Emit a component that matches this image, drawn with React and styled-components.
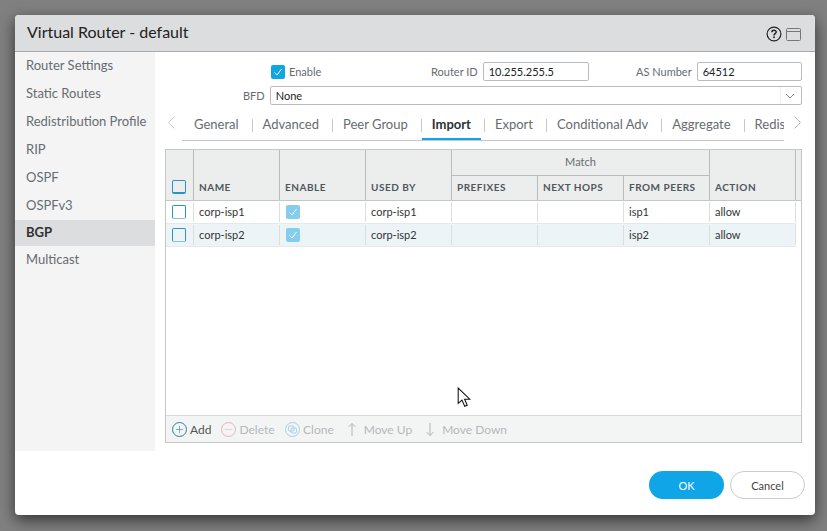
import React from "react";
import styled, { createGlobalStyle } from "styled-components";
import { Plus, Minus } from "lucide-react";

const GlobalStyle = createGlobalStyle`
  html, body {
    margin: 0;
    height: 100%;
    background: #808080;
    font-family: "Lato", "Liberation Sans", sans-serif;
  }
  * { box-sizing: border-box; }
`;

const columns = "28px repeat(7, 86px) 1fr";

const sideItems = [
  "Router Settings",
  "Static Routes",
  "Redistribution Profile",
  "RIP",
  "OSPF",
  "OSPFv3",
  "BGP",
  "Multicast",
];

const tabs = ["General", "Advanced", "Peer Group", "Import", "Export", "Conditional Adv", "Aggregate", "Redis"];

const rows = [
  { name: "corp-isp1", usedBy: "corp-isp1", peers: "isp1", action: "allow" },
  { name: "corp-isp2", usedBy: "corp-isp2", peers: "isp2", action: "allow" },
];

const CheckMark = () => (
  <svg width="10" height="10" viewBox="0 0 10 10" fill="none">
    <path d="M1.5 5.5 L4 8 L8.5 2" stroke="#fff" strokeWidth="1" />
  </svg>
);

const HelpIcon = () => (
  <svg width="16" height="16" viewBox="0 0 16 16" fill="none">
    <circle cx="8" cy="8" r="6.9" stroke="#222" strokeWidth="1.2" />
    <path d="M5.9 6.2 C5.9 3.7 10.2 3.7 10.2 6.1 C10.2 7.7 8 7.6 8 9.4" stroke="#222" strokeWidth="1.5" />
    <rect x="7.2" y="10.4" width="1.6" height="1.7" fill="#222" />
  </svg>
);

const MaxIcon = () => (
  <svg width="15" height="13" viewBox="0 0 15 13" fill="none">
    <rect x="0.5" y="0.5" width="14" height="12" rx="1" stroke="#777" />
    <path d="M1 3.5 H14" stroke="#777" />
  </svg>
);

const MouseCursor = () => (
  <svg width="15" height="21" viewBox="0 0 14 20">
    <path d="M1 1 V15.5 L4.6 12.4 L7.2 18.4 L9.6 17.3 L7.1 11.6 H12 Z" fill="#fff" stroke="#111" strokeWidth="1" />
  </svg>
);

const CloneIcon = () => (
  <svg width="15" height="15" viewBox="0 0 15 15" fill="none">
    <circle cx="7.5" cy="7.5" r="7" stroke="#a6d0e4" />
    <rect x="3.5" y="4" width="5.5" height="5" rx="1.2" stroke="#a6d0e4" />
    <rect x="6" y="6" width="5.5" height="5" rx="1.2" stroke="#a6d0e4" />
  </svg>
);

const UpArrow = () => (
  <svg width="14" height="15" viewBox="0 0 14 15" fill="none">
    <path d="M7 1.5 V14 M3.5 5 L7 1.5 L10.5 5" stroke="#b0b4b6" strokeWidth="1" />
  </svg>
);

const DownArrow = () => (
  <svg width="14" height="15" viewBox="0 0 14 15" fill="none">
    <path d="M7 1 V13.5 M3.5 10 L7 13.5 L10.5 10" stroke="#b0b4b6" strokeWidth="1" />
  </svg>
);

export default function App() {
  return (
    <>
      <GlobalStyle />
      <Page>
        <Dialog>
          <Header>
            <Title>Virtual Router - default</Title>
            <HeaderIcons>
              <HelpIcon />
              <MaxIcon />
            </HeaderIcons>
          </Header>
          <Body>
            <Sidebar>
              {sideItems.map(item => (
                <SideItem key={item} $active={item === "BGP"}>{item}</SideItem>
              ))}
            </Sidebar>
            <Content>
              <TopRow>
                <EnableGroup>
                  <BlueCheck><CheckMark /></BlueCheck>
                  <FieldLabel>Enable</FieldLabel>
                </EnableGroup>
                <RouterGroup>
                  <FieldLabel>Router ID</FieldLabel>
                  <InputBox $width="106px">10.255.255.5</InputBox>
                </RouterGroup>
                <AsGroup>
                  <FieldLabel>AS Number</FieldLabel>
                  <InputBox $width="105px">64512</InputBox>
                </AsGroup>
              </TopRow>
              <BfdRow>
                <BfdLabel>BFD</BfdLabel>
                <SelectBox>
                  None
                  <SelectArrow>
                    <svg width="10" height="6" viewBox="0 0 10 6" fill="none">
                      <path d="M1 1 L5 5 L9 1" stroke="#888" strokeWidth="1" />
                    </svg>
                  </SelectArrow>
                </SelectBox>
              </BfdRow>
              <TabBar>
                <TabArrow>
                  <svg width="9" height="13" viewBox="0 0 9 13" fill="none">
                    <path d="M7.5 0.5 L1.5 6.5 L7.5 12.5" stroke="#ccc" strokeWidth="1" />
                  </svg>
                </TabArrow>
                <TabList>
                  {tabs.map((tab, i) => (
                    <React.Fragment key={tab}>
                      {i > 0 && <TabDivider />}
                      <Tab $active={tab === "Import"}>{tab}</Tab>
                    </React.Fragment>
                  ))}
                </TabList>
                <NextArrow>
                  <svg width="9" height="13" viewBox="0 0 9 13" fill="none">
                    <path d="M1.5 0.5 L7.5 6.5 L1.5 12.5" stroke="#bbb" strokeWidth="1" />
                  </svg>
                </NextArrow>
              </TabBar>
              <TablePanel>
                <HeadGrid>
                  <CheckHead><EmptyCheck $head /></CheckHead>
                  <HeadCell $span={2}>NAME</HeadCell>
                  <HeadCell $span={2}>ENABLE</HeadCell>
                  <HeadCell $span={2}>USED BY</HeadCell>
                  <MatchCell>Match</MatchCell>
                  <HeadCell>PREFIXES</HeadCell>
                  <HeadCell>NEXT HOPS</HeadCell>
                  <HeadCell>FROM PEERS</HeadCell>
                  <ActionHead>ACTION</ActionHead>
                  <FillerHead />
                </HeadGrid>
                {rows.map((row, i) => (
                  <Row key={row.name} $alt={i % 2 === 1}>
                    <CheckCell><EmptyCheck /></CheckCell>
                    <Cell>{row.name}</Cell>
                    <EnableCell><PaleCheck><CheckMark /></PaleCheck></EnableCell>
                    <Cell>{row.usedBy}</Cell>
                    <Cell />
                    <Cell />
                    <Cell>{row.peers}</Cell>
                    <Cell>{row.action}</Cell>
                  </Row>
                ))}
                <TableSpace>
                  <CursorSpot><MouseCursor /></CursorSpot>
                </TableSpace>
                <Toolbar>
                  <ToolButton $first>
                    <RoundIcon $color="#2d7fa5"><Plus size={11} strokeWidth={1.3} /></RoundIcon>
                    Add
                  </ToolButton>
                  <ToolButton $gap="10.5px">
                    <RoundIcon $color="#e8b3b3"><Minus size={11} strokeWidth={1.3} /></RoundIcon>
                    Delete
                  </ToolButton>
                  <ToolButton $gap="11px">
                    <CloneIcon />
                    Clone
                  </ToolButton>
                  <ToolButton $wide $gap="11px">
                    <UpArrow />
                    Move Up
                  </ToolButton>
                  <ToolButton $wide>
                    <DownArrow />
                    Move Down
                  </ToolButton>
                </Toolbar>
              </TablePanel>
            </Content>
          </Body>
          <Footer>
            <OkButton>OK</OkButton>
            <CancelButton>Cancel</CancelButton>
          </Footer>
        </Dialog>
      </Page>
    </>
  );
}

const Page = styled.div`
  width: 827px;
  height: 531px;
  padding: 15px 12px;
  overflow: hidden;
`;

const Dialog = styled.div`
  width: 800px;
  height: 500px;
  margin-left: 3px;
  background: #fff;
  border-radius: 4px;
  overflow: hidden;
  box-shadow: 0 5px 15px rgba(0, 0, 0, 0.6);
  display: flex;
  flex-direction: column;
`;

const Header = styled.div`
  height: 37px;
  flex: none;
  background: #dcddde;
  border-bottom: 1px solid #a8a9aa;
  padding: 2px 14px 0 12px;
  display: flex;
  align-items: center;
  justify-content: space-between;
`;

const Title = styled.div`
  font-size: 16px;
  color: #222;
  margin-top: -5px;
`;

const HeaderIcons = styled.div`
  display: flex;
  align-items: center;
  gap: 4px;
`;

const Body = styled.div`
  height: 400px;
  flex: none;
  display: flex;
  align-items: flex-start;
`;

const Sidebar = styled.div`
  width: 140px;
  height: 399px;
  flex: none;
  background: #f4f4f4;
`;

const SideItem = styled.div`
  height: ${p => (p.$active ? "26px" : "28px")};
  padding: 0 0 2px 11px;
  display: flex;
  align-items: center;
  font-size: 13px;
  color: ${p => (p.$active ? "#2c3136" : "#666c72")};
  font-weight: ${p => (p.$active ? 700 : 400)};
  background: ${p => (p.$active ? "#dcddde" : "transparent")};
`;

const Content = styled.div`
  flex: 1;
  padding: 10px 13px 0 10px;
  display: flex;
  flex-direction: column;
`;

const TopRow = styled.div`
  height: 19px;
  display: flex;
  align-items: center;
`;

const EnableGroup = styled.div`
  margin-left: 106px;
  width: 160px;
  display: flex;
  align-items: center;
  gap: 4px;
`;

const RouterGroup = styled.div`
  width: 158px;
  display: flex;
  align-items: center;
  gap: 5px;
`;

const AsGroup = styled.div`
  margin-left: 47px;
  display: flex;
  align-items: center;
  gap: 5px;
`;

const FieldLabel = styled.span`
  font-size: 11px;
  color: #666c72;
`;

const BlueCheck = styled.span`
  width: 14px;
  height: 14px;
  border-radius: 2px;
  background: #0fa5e6;
  display: flex;
  align-items: center;
  justify-content: center;
`;

const PaleCheck = styled(BlueCheck)`
  background: #85cdee;
`;

const InputBox = styled.div`
  width: ${p => p.$width};
  height: 19px;
  border: 1px solid #b9bbbd;
  border-radius: 2px;
  background: #fff;
  padding: 0 0 1px 5px;
  display: flex;
  align-items: center;
  font-size: 11px;
  color: #222;
`;

const BfdRow = styled.div`
  height: 19px;
  margin-top: 5px;
  display: flex;
  align-items: center;
  gap: 5px;
`;

const BfdLabel = styled(FieldLabel)`
  margin-left: 78px;
`;

const SelectBox = styled(InputBox)`
  flex: 1;
  position: relative;
`;

const SelectArrow = styled.span`
  position: absolute;
  right: 0;
  top: 0;
  bottom: 0;
  width: 21px;
  border-left: 1px solid #f0f1f1;
  padding-left: 4px;
  display: flex;
  align-items: center;
`;

const TabBar = styled.div`
  height: 30px;
  margin-top: 6px;
  display: flex;
  align-items: flex-start;
`;

const TabArrow = styled.span`
  width: 17px;
  flex: none;
  padding: 5px 0 0 2px;
  display: flex;
`;

const NextArrow = styled(TabArrow)`
  width: 18px;
  padding-left: 9px;
`;

const TabList = styled.div`
  flex: 1;
  min-width: 0;
  height: 30px;
  overflow: hidden;
  display: flex;
  align-items: flex-start;
  border-bottom: 1px solid #c4c6c8;
  padding-left: 12px;
`;

const Tab = styled.div`
  height: 29px;
  flex: none;
  padding: ${p => (p.$active ? "0 10px 3px" : "0 0 3px")};
  margin: ${p => (p.$active ? "0 -10px" : "0")};
  display: flex;
  align-items: center;
  font-size: 13px;
  color: ${p => (p.$active ? "#2c3136" : "#666c72")};
  font-weight: ${p => (p.$active ? 700 : 400)};
  box-shadow: ${p => (p.$active ? "inset 0 -2px 0 #0fa5e6" : "none")};
`;

const TabDivider = styled.span`
  width: 1px;
  height: 13px;
  flex: none;
  margin: 8px 10px 0 13px;
  background: #c4c6c8;
`;

const TablePanel = styled.div`
  height: 294px;
  margin-top: 8px;
  border: 1px solid #c4c6c8;
  display: flex;
  flex-direction: column;
`;

const HeadGrid = styled.div`
  display: grid;
  grid-template-columns: ${columns};
  grid-template-rows: 26px 24px;
  flex: none;
  background: #eceeee;
  border-bottom: 1px solid #c4c6c8;
  height: 51px;
`;

const HeadCell = styled.div`
  grid-row: ${p => (p.$span ? "1 / span 2" : "auto")};
  border-right: 1px solid #b9bbbd;
  padding: 0 0 7px 5px;
  display: flex;
  align-items: flex-end;
  font-size: 10px;
  font-weight: 700;
  letter-spacing: 0.5px;
  color: #50565c;
`;

const CheckHead = styled(HeadCell)`
  grid-row: 1 / span 2;
  padding: 0 0 6px 6px;
`;

const MatchCell = styled.div`
  grid-column: 5 / span 3;
  grid-row: 1;
  border-right: 1px solid #b9bbbd;
  border-bottom: 1px solid #b9bbbd;
  padding-bottom: 2px;
  display: flex;
  align-items: center;
  justify-content: center;
  font-size: 11px;
  color: #666c72;
`;

const ActionHead = styled(HeadCell)`
  grid-column: 8;
  grid-row: 1 / span 2;
`;

const FillerHead = styled.div`
  grid-column: 9;
  grid-row: 1 / span 2;
`;

const Row = styled.div`
  display: grid;
  grid-template-columns: ${columns};
  height: 23px;
  flex: none;
  margin-right: 5px;
  background: ${p => (p.$alt ? "#edf4f7" : "#fff")};
  border-bottom: 1px solid #e6e8e9;
`;

const Cell = styled.div`
  border-right: 1px solid #dcdee0;
  margin: 1px 0;
  padding: 0 0 2px 5px;
  display: flex;
  align-items: center;
  font-size: 11px;
  color: #333;
`;

const CheckCell = styled(Cell)`
  padding: 0 0 0 6px;
`;

const EnableCell = styled(Cell)`
  padding: 0 0 0 6px;
`;

const EmptyCheck = styled.span`
  display: block;
  width: 14px;
  height: 14px;
  border: 1px solid #2d93c4;
  border-radius: 2px;
  border-bottom-width: ${p => (p.$head ? "2px" : "1px")};
  border-bottom-color: ${p => (p.$head ? "#2d93c4" : "#85c3e0")};
`;

const TableSpace = styled.div`
  flex: 1;
  position: relative;
`;

const CursorSpot = styled.span`
  position: absolute;
  left: 291px;
  top: 140px;
  display: flex;
`;

const Toolbar = styled.div`
  height: 27px;
  flex: none;
  background: #f3f5f5;
  border-top: 1px solid #d8dadb;
  padding-left: 6px;
  display: flex;
  align-items: center;
`;

const ToolButton = styled.div`
  display: flex;
  align-items: center;
  gap: ${p => (p.$wide ? "5px" : "3px")};
  font-size: 12px;
  color: ${p => (p.$first ? "#555" : "#b4b8ba")};
  margin-right: ${p => p.$gap || (p.$wide ? "12px" : "10px")};
`;

const RoundIcon = styled.span`
  width: 15px;
  height: 15px;
  border-radius: 50%;
  border: 1px solid ${p => p.$color};
  color: ${p => p.$color};
  display: flex;
  align-items: center;
  justify-content: center;
`;

const Footer = styled.div`
  flex: 1;
  padding: 19px 10px 0 0;
  display: flex;
  justify-content: flex-end;
  align-items: flex-start;
  gap: 6px;
`;

const OkButton = styled.div`
  width: 75px;
  height: 28px;
  border-radius: 14px;
  background: #0fa5e6;
  color: #fff;
  font-size: 11px;
  font-weight: 400;
  display: flex;
  align-items: center;
  justify-content: center;
`;

const CancelButton = styled(OkButton)`
  background: #fff;
  border: 1px solid #c9cbcd;
  color: #444;
`;
